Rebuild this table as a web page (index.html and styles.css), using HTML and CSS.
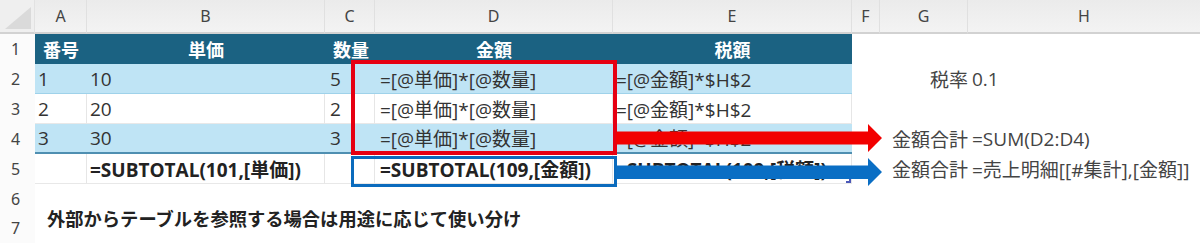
FILE: index.html
```html
<!DOCTYPE html>
<html lang="ja">
<head>
<meta charset="utf-8">
<link rel="stylesheet" href="styles.css">
</head>
<body>
<div class="sheet">
  <!-- column header row -->
  <div class="corner"><span class="tri"></span></div>
  <div class="colh">A</div>
  <div class="colh">B</div>
  <div class="colh">C</div>
  <div class="colh">D</div>
  <div class="colh">E</div>
  <div class="colh">F</div>
  <div class="colh">G</div>
  <div class="colh last">H</div>

  <!-- row 1 -->
  <div class="rowh">1</div>
  <div class="c th">番号</div>
  <div class="c th ctr">単価</div>
  <div class="c th">数量</div>
  <div class="c th ctr">金額</div>
  <div class="c th ctr">税額</div>
  <div class="c"></div>
  <div class="c"></div>
  <div class="c"></div>

  <!-- row 2 -->
  <div class="rowh">2</div>
  <div class="c band">1</div>
  <div class="c band">10</div>
  <div class="c band pc">5</div>
  <div class="c band pd">=[@単価]*[@数量]</div>
  <div class="c band">=[@金額]*$H$2</div>
  <div class="c"></div>
  <div class="c note r">税率</div>
  <div class="c note">0.1</div>

  <!-- row 3 -->
  <div class="rowh">3</div>
  <div class="c plain">2</div>
  <div class="c plain">20</div>
  <div class="c plain pc">2</div>
  <div class="c plain pd">=[@単価]*[@数量]</div>
  <div class="c plain">=[@金額]*$H$2</div>
  <div class="c"></div>
  <div class="c"></div>
  <div class="c"></div>

  <!-- row 4 -->
  <div class="rowh">4</div>
  <div class="c band end">3</div>
  <div class="c band end">30</div>
  <div class="c band end pc">3</div>
  <div class="c band end pd">=[@単価]*[@数量]</div>
  <div class="c band end">=[@金額]*$H$2</div>
  <div class="c"></div>
  <div class="c note r">金額合計</div>
  <div class="c note">=SUM(D2:D4)</div>

  <!-- row 5 -->
  <div class="rowh">5</div>
  <div class="c plain"></div>
  <div class="c plain bold">=SUBTOTAL(101,[単価])</div>
  <div class="c plain"></div>
  <div class="c plain bold pd">=SUBTOTAL(109,[金額])</div>
  <div class="c plain bold">=SUBTOTAL(109,[税額])</div>
  <div class="c"></div>
  <div class="c note r">金額合計</div>
  <div class="c note">=売上明細[[#集計],[金額]]</div>

  <!-- row 6 -->
  <div class="rowh">6</div>
  <div class="c caption">外部からテーブルを参照する場合は用途に応じて使い分け</div>
  <div class="c"></div><div class="c"></div><div class="c"></div>
  <div class="c"></div><div class="c"></div><div class="c"></div><div class="c"></div>

  <!-- row 7 -->
  <div class="rowh">7</div>
  <div class="c"></div><div class="c"></div><div class="c"></div>
  <div class="c"></div><div class="c"></div><div class="c"></div><div class="c"></div>

  <!-- overlays -->
  <div class="handle"></div>
  <div class="box red-box"></div>
  <div class="box blue-box"></div>
  <svg class="arrow red-arrow" width="266" height="28" viewBox="0 0 266 28">
    <path d="M0 7.5 H252 V0 L266 14 L252 28 V20.5 H0 Z" fill="#f20000"/>
  </svg>
  <svg class="arrow blue-arrow" width="266" height="28" viewBox="0 0 266 28">
    <path d="M0 7.5 H252 V0 L266 14 L252 28 V21 H0 Z" fill="#0a6ec4"/>
  </svg>
</div>
</body>
</html>
```
FILE: styles.css
```css
html, body {
  margin: 0;
  padding: 0;
  background: #ffffff;
}

body {
  width: 1200px;
  height: 243px;
  overflow: hidden;
  font-family: "Open Sans", "Noto Sans CJK JP", sans-serif;
  color: #333333;
}

.sheet {
  position: relative;
  display: grid;
  grid-template-columns: 35px 52px 238px 50px 238px 239px 28px 88px 232px;
  grid-template-rows: 34px 30px 30px 30px 30px 30px 29px 30px;
  width: 1200px;
  height: 243px;
}

.corner {
  position: relative;
  background: #efefef;
  border-bottom: 2px solid #d2d2d2;
  border-right: 1px solid #e2e2e2;
  box-sizing: border-box;
}

.tri {
  position: absolute;
  right: 3px;
  bottom: 3px;
  width: 0;
  height: 0;
  border-left: 26px solid transparent;
  border-bottom: 22px solid #dadada;
}

.colh {
  display: flex;
  align-items: center;
  justify-content: center;
  background: linear-gradient(#ebebeb, #f3f3f3);
  border-bottom: 2px solid #d2d2d2;
  border-right: 1px solid #e0e0e0;
  box-sizing: border-box;
  font-family: "Noto Sans", sans-serif;
  font-size: 16px;
  color: #444444;
}

.colh.last {
  border-right: none;
}

.rowh {
  display: flex;
  align-items: center;
  justify-content: center;
  font-family: "Noto Sans", sans-serif;
  font-size: 16px;
  color: #444444;
  padding-right: 4px;
  background: #fbfbfb;
}

.c {
  display: flex;
  align-items: center;
  padding-left: 3px;
  font-size: 19px;
  white-space: nowrap;
  box-sizing: border-box;
  min-width: 0;
}

.th {
  background: #1b6282;
  color: #ffffff;
  font-weight: 700;
  font-size: 18px;
  font-family: "Noto Sans CJK JP", sans-serif;
  padding-left: 8px;
}

.th.ctr {
  justify-content: center;
  padding-left: 0;
}

.band {
  background: #bfe4f5;
  border-bottom: 1px solid #9fd2ea;
}

.band.end {
  border-bottom: 2px solid #4f8fb1;
}

.plain {
  background: #ffffff;
  border-right: 1px solid #e6e6e6;
  border-bottom: 1px solid #e8e8e8;
}

.pc {
  padding-left: 5px;
}

.pd {
  padding-left: 5px;
}

.bold {
  font-weight: 700;
  color: #222222;
}

.note {
  color: #444444;
  font-size: 19px;
  padding-left: 4px;
}

.note.r {
  justify-content: flex-end;
  padding-left: 0;
  padding-right: 0;
}

.caption {
  grid-column: 2;
  grid-row: 7 / 9;
  overflow: visible;
  font-family: "Noto Sans CJK JP", sans-serif;
  font-weight: 700;
  color: #222222;
  font-size: 18.3px;
  padding-left: 12px;
  padding-top: 8px;
}

.box {
  position: absolute;
  box-sizing: border-box;
  pointer-events: none;
}

.red-box {
  left: 351px;
  top: 60px;
  width: 266px;
  height: 95px;
  border: 4px solid #e60012;
}

.blue-box {
  left: 351px;
  top: 156px;
  width: 266px;
  height: 31px;
  border: 3px solid #0b6bbd;
}

.arrow {
  position: absolute;
  left: 616px;
  display: block;
}

.red-arrow {
  top: 124px;
}

.blue-arrow {
  top: 158px;
}

.handle {
  position: absolute;
  left: 846px;
  top: 176px;
  width: 3px;
  height: 5px;
  border-right: 2px solid #4b58b8;
  border-bottom: 2px solid #4b58b8;
}
```
